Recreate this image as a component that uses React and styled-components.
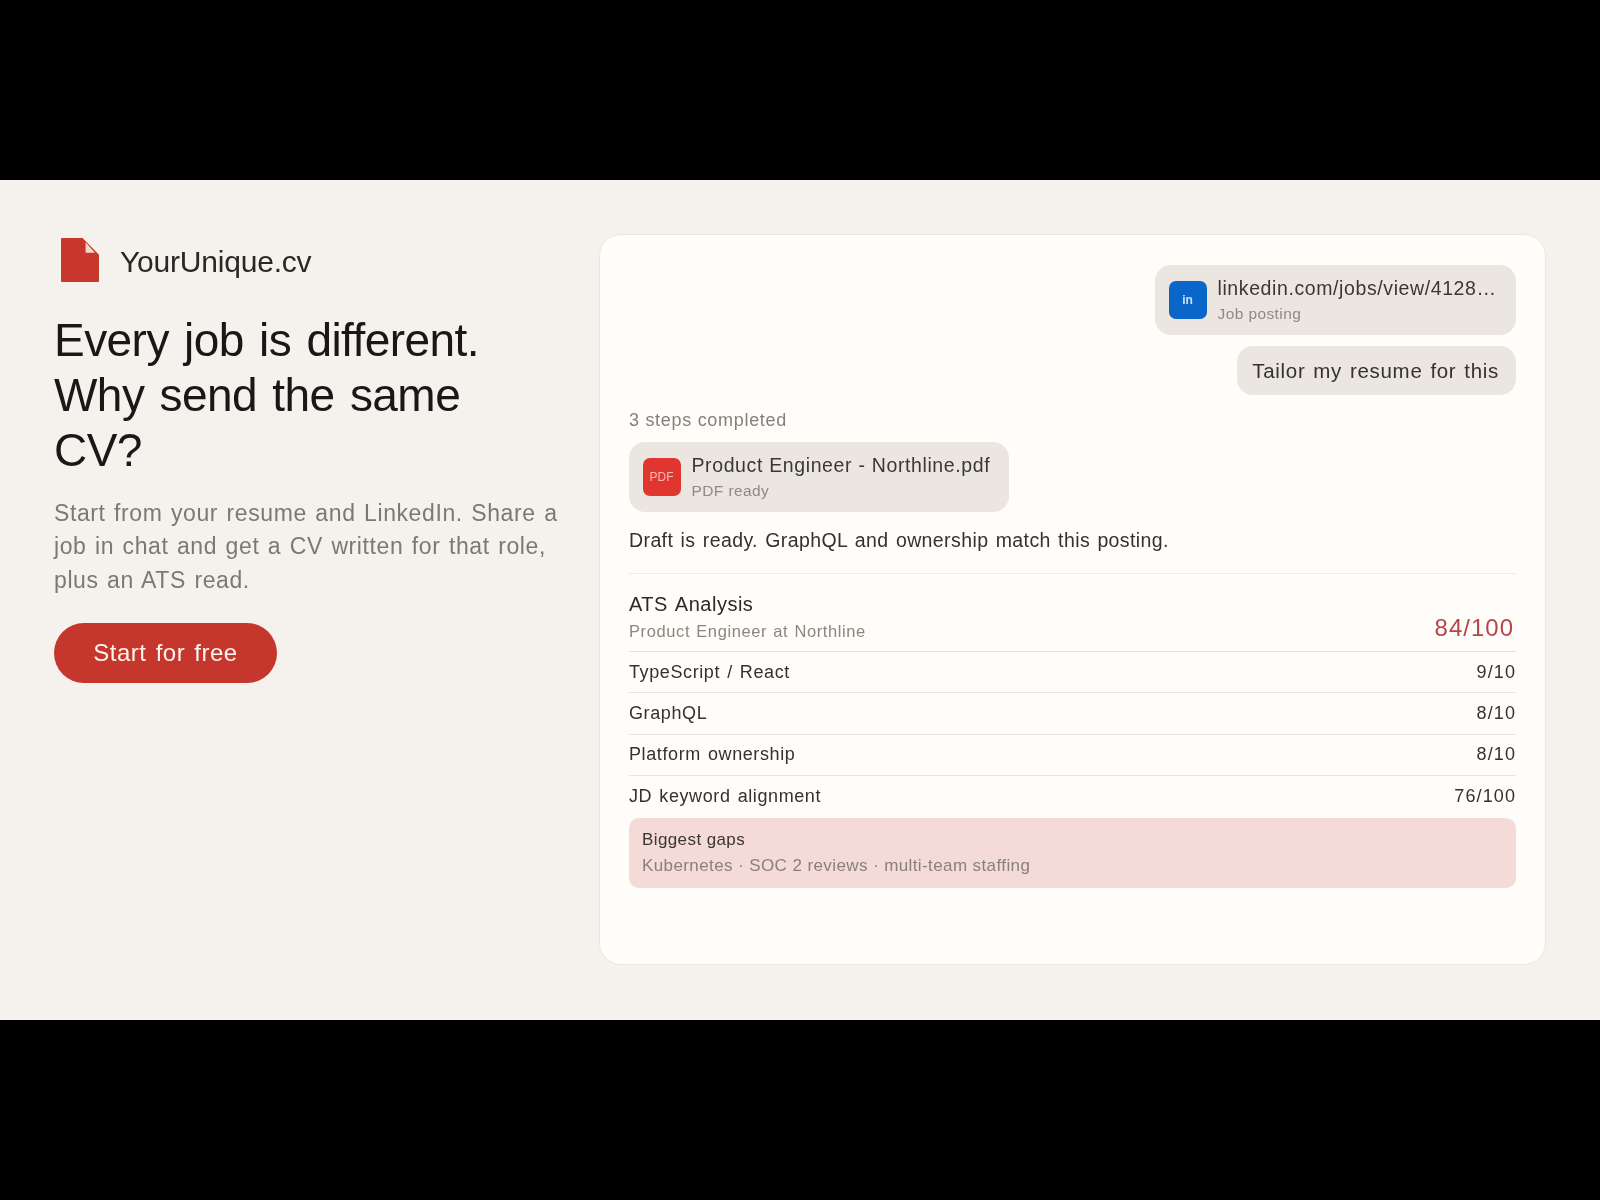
import styled, { createGlobalStyle } from 'styled-components'

const Global = createGlobalStyle`
  html, body {
    margin: 0;
    background: #000;
  }
  body {
    font-family: "Liberation Sans", Arial, sans-serif;
    color: #24221f;
  }
`

const Page = styled.div`
  height: 1200px;
  padding: 180px 0;
  box-sizing: border-box;
`

const Hero = styled.section`
  height: 840px;
  box-sizing: border-box;
  padding: 54px 54px 55px;
  background: #f5f2ed;
  display: grid;
  grid-template-columns: 515px 1fr;
  column-gap: 30px;
  filter: blur(0.7px);
`

const Intro = styled.div`
  display: flex;
  flex-direction: column;
  align-items: flex-start;
`

const Brand = styled.div`
  display: flex;
  align-items: center;
  gap: 21px;
  height: 44px;
  margin: 4px 0 31px 7px;
`

const BrandName = styled.span`
  margin-top: 3px;
  font-size: 30px;
  letter-spacing: -0.2px;
  color: #2a2825;
`

const Heading = styled.h1`
  max-width: 480px;
  margin: 0 0 19px;
  font-size: 46px;
  line-height: 55px;
  font-weight: 400;
  letter-spacing: -0.55px;
  word-spacing: 3px;
  color: #191816;
`

const Lead = styled.p`
  margin: 0 0 26px;
  font-size: 23px;
  line-height: 33.3px;
  letter-spacing: 0.6px;
  word-spacing: 1.5px;
  color: #7d7870;
`

const CtaButton = styled.button`
  width: 223px;
  height: 60px;
  border: 0;
  border-radius: 30px;
  background: #c5372c;
  color: #fdf4ee;
  font: inherit;
  font-size: 24px;
  letter-spacing: 0.5px;
  word-spacing: 2px;
  padding: 0;
`

const Card = styled.div`
  box-sizing: border-box;
  padding: 30px 29px;
  border: 1px solid #ebe7e0;
  border-radius: 22px;
  background: #fffdf9;
  display: flex;
  flex-direction: column;
`

const Bubble = styled.div`
  align-self: ${p => (p.$right ? 'flex-end' : 'flex-start')};
  box-sizing: border-box;
  display: flex;
  align-items: center;
  gap: 11px;
  border-radius: 16px;
  background: #ebe6df;
`

const FileBubble = styled(Bubble)`
  width: ${p => p.$width}px;
  height: 70px;
  padding: 0 13.5px;
`

const TextBubble = styled(Bubble)`
  height: 49px;
  margin-top: 11px;
  padding: 0 17px 0 15px;
  font-size: 20.5px;
  letter-spacing: 0.7px;
  word-spacing: 1.5px;
  color: #34322e;
`

const Badge = styled.div`
  flex: none;
  width: 38px;
  height: 38px;
  border-radius: 7px;
  background: ${p => p.$color};
  color: ${p => p.$ink};
  display: flex;
  align-items: center;
  justify-content: center;
  font-size: 12px;
  font-weight: ${p => p.$weight};
`

const FileText = styled.div`
  min-width: 0;
  display: flex;
  flex-direction: column;
  gap: 4px;
`

const FileName = styled.div`
  font-size: 19.5px;
  line-height: 24px;
  letter-spacing: 0.6px;
  word-spacing: 0.3px;
  white-space: nowrap;
  color: #3a3835;
`

const FileMeta = styled.div`
  font-size: 15.5px;
  line-height: 20px;
  letter-spacing: 0.4px;
  color: #8f8a82;
`

const Steps = styled.div`
  margin: 15px 0 12px;
  font-size: 18px;
  line-height: 20px;
  letter-spacing: 0.7px;
  color: #85807a;
`

const Note = styled.p`
  margin: 16px 0 0;
  padding-bottom: 21px;
  border-bottom: 1px solid #eeebe5;
  font-size: 19.5px;
  line-height: 24px;
  letter-spacing: 0.4px;
  word-spacing: 1.5px;
  color: #34322e;
`

const ScoreHead = styled.div`
  display: flex;
  justify-content: space-between;
  align-items: flex-end;
  padding: 18px 0 10px;
  border-bottom: 1px solid #e6e2db;
`

const ScoreTitle = styled.div`
  font-size: 20px;
  line-height: 24px;
  letter-spacing: 0.5px;
  word-spacing: 2px;
  color: #2c2a27;
`

const ScoreSub = styled.div`
  margin-top: 5px;
  font-size: 16.5px;
  line-height: 20px;
  letter-spacing: 0.6px;
  word-spacing: 1px;
  color: #8b867f;
`

const Total = styled.div`
  margin-bottom: -2px;
  padding-right: 2px;
  font-size: 24px;
  line-height: 30px;
  letter-spacing: 1px;
  color: #b6464a;
`

const Row = styled.div`
  height: 41.4px;
  box-sizing: border-box;
  display: flex;
  justify-content: space-between;
  align-items: center;
  border-bottom: ${p => (p.$last ? '0' : '1px solid #e9e5de')};
  font-size: 18px;
  letter-spacing: 0.6px;
  word-spacing: 1.5px;
  color: #34322e;
`

const RowScore = styled.span`
  letter-spacing: 1.1px;
`

const Gaps = styled.div`
  height: 70px;
  box-sizing: border-box;
  padding: 11px 13px;
  border-radius: 10px;
  background: #f4dbd7;
`

const GapTitle = styled.div`
  font-size: 17px;
  line-height: 22px;
  letter-spacing: 0.4px;
  color: #3a3633;
`

const GapList = styled.div`
  margin-top: 4px;
  font-size: 17px;
  line-height: 22px;
  letter-spacing: 0.4px;
  color: #8a807a;
`

const LogoMark = () => (
  <svg width="38" height="44" viewBox="0 0 37 42" preserveAspectRatio="none">
    <path d="M1 0H21L37 16V41a1 1 0 0 1-1 1H1a1 1 0 0 1-1-1V1a1 1 0 0 1 1-1z" fill="#c8372c" />
    <path d="M24 4L33 14H24z" fill="#f1d9cf" />
  </svg>
)

const rows = [
  ['TypeScript / React', '9/10'],
  ['GraphQL', '8/10'],
  ['Platform ownership', '8/10'],
  ['JD keyword alignment', '76/100'],
]

export default function App() {
  return (
    <Page>
      <Global />
      <Hero>
        <Intro>
          <Brand>
            <LogoMark />
            <BrandName>YourUnique.cv</BrandName>
          </Brand>
          <Heading>Every job is different. Why send the same CV?</Heading>
          <Lead>Start from your resume and LinkedIn. Share a job in chat and get a CV written for that role, plus an ATS read.</Lead>
          <CtaButton>Start for free</CtaButton>
        </Intro>
        <Card>
          <FileBubble $right $width={361}>
            <Badge $color="#0a66c8" $ink="#cfe3f7" $weight={700}>in</Badge>
            <FileText>
              <FileName>linkedin.com/jobs/view/4128…</FileName>
              <FileMeta>Job posting</FileMeta>
            </FileText>
          </FileBubble>
          <TextBubble $right>Tailor my resume for this</TextBubble>
          <Steps>3 steps completed</Steps>
          <FileBubble $width={380}>
            <Badge $color="#e1352f" $ink="#f7b9b2" $weight={400}>PDF</Badge>
            <FileText>
              <FileName>Product Engineer - Northline.pdf</FileName>
              <FileMeta>PDF ready</FileMeta>
            </FileText>
          </FileBubble>
          <Note>Draft is ready. GraphQL and ownership match this posting.</Note>
          <ScoreHead>
            <div>
              <ScoreTitle>ATS Analysis</ScoreTitle>
              <ScoreSub>Product Engineer at Northline</ScoreSub>
            </div>
            <Total>84/100</Total>
          </ScoreHead>
          {rows.map(([label, score], i) => (
            <Row key={label} $last={i === rows.length - 1}>
              <span>{label}</span>
              <RowScore>{score}</RowScore>
            </Row>
          ))}
          <Gaps>
            <GapTitle>Biggest gaps</GapTitle>
            <GapList>Kubernetes · SOC 2 reviews · multi-team staffing</GapList>
          </Gaps>
        </Card>
      </Hero>
    </Page>
  )
}
